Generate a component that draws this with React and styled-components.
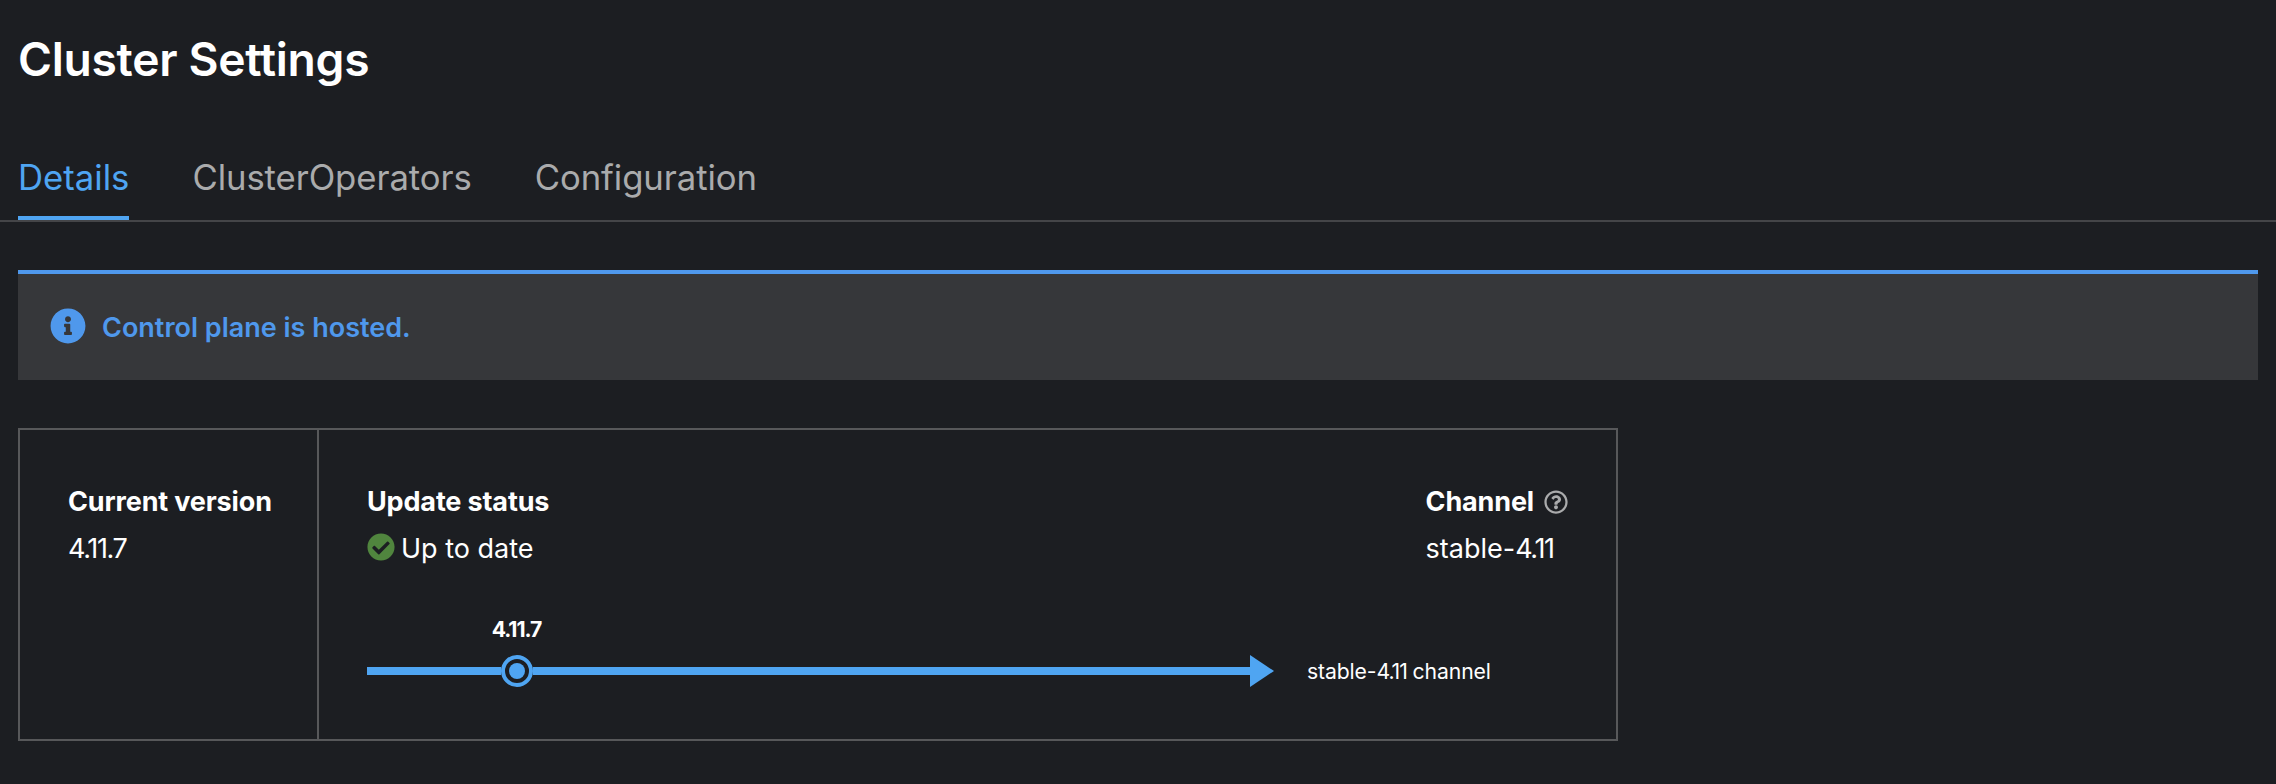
import React from 'react';
import styled, { createGlobalStyle } from 'styled-components';
import { FaInfoCircle, FaCheckCircle, FaRegQuestionCircle } from 'react-icons/fa';

const colors = {
  background: '#1c1e22',
  active: '#4fa5f2',
  info: '#4f98ec',
  success: '#50853e',
  alert: '#36373a',
  rule: '#444548',
  border: '#57585a',
  muted: '#aaabac',
};

const GlobalStyle = createGlobalStyle`
  * { box-sizing: border-box; }
  body {
    margin: 0;
    background: ${colors.background};
    color: #fff;
    font-family: Inter, "Liberation Sans", sans-serif;
    font-size: 27px;
    line-height: 42px;
  }
  svg { display: block; flex: none; }
`;

const Page = styled.main`
  min-height: 784px;
  padding-top: 28px;
`;

const Title = styled.h1`
  margin: 0;
  padding: 0 18px;
  font-size: 46.2px;
  line-height: 62px;
  font-weight: 600;
  letter-spacing: -0.3px;
`;

const Tabs = styled.nav`
  display: flex;
  gap: 64px;
  margin-top: 60px;
  padding: 0 18px;
  border-bottom: 2px solid ${colors.rule};
`;

const Tab = styled.a`
  height: 70px;
  font-size: 34.7px;
  line-height: 54px;
  letter-spacing: ${(p) => (p.$active ? '0' : '-0.08px')};
  white-space: nowrap;
  color: ${(p) => (p.$active ? colors.active : colors.muted)};
  border-bottom: 4px solid ${(p) => (p.$active ? colors.active : 'transparent')};

  & + & { margin-left: -1px; }
`;

const Alert = styled.section`
  display: flex;
  gap: 16px;
  height: 110px;
  margin: 48px 18px 0;
  padding: 33px 32px 0;
  background: ${colors.alert};
  border-top: 4px solid ${colors.info};
  color: ${colors.info};
  font-weight: 600;

  svg { margin-top: 1px; }
`;

const Card = styled.section`
  display: flex;
  width: 1600px;
  height: 313px;
  margin: 48px 0 0 18px;
  border: 2px solid ${colors.border};
`;

const VersionPanel = styled.div`
  width: 299px;
  padding: 51px 0 0 48px;
  border-right: 2px solid ${colors.border};
`;

const UpdatePanel = styled.div`
  flex: 1;
  padding: 51px 48px 0;
`;

const PanelHeader = styled.div`
  display: flex;
  justify-content: space-between;
`;

const Field = styled.div`
  display: flex;
  flex-direction: column;
  gap: 5px;
`;

const Label = styled.div`
  display: flex;
  align-items: center;
  gap: 10px;
  font-weight: 700;
  letter-spacing: -0.15px;
  white-space: nowrap;
`;

const HelpIcon = styled(FaRegQuestionCircle)`
  color: ${colors.muted};
`;

const Value = styled.div`
  display: flex;
  align-items: center;
  gap: 6px;
  white-space: nowrap;
`;

const SuccessIcon = styled(FaCheckCircle)`
  margin-bottom: 4px;
  color: ${colors.success};
`;

const VersionNumber = styled.span`
  letter-spacing: -0.05em;
`;

const Timeline = styled.div`
  margin-top: 43px;
  font-size: 21.2px;
  line-height: 33px;
`;

const Milestone = styled.div`
  width: 299px;
  text-align: center;
  font-weight: 700;
`;

const Track = styled.div`
  display: flex;
  align-items: center;
  height: 32px;
  margin-top: 9px;
`;

const Segment = styled.div`
  width: ${(p) => p.$width}px;
  height: 8px;
  background: ${colors.active};
`;

const Marker = styled.div`
  display: grid;
  place-items: center;
  width: 32px;
  height: 32px;
  border: 4px solid ${colors.active};
  border-radius: 50%;

  &::after {
    content: '';
    width: 16px;
    height: 16px;
    border-radius: 50%;
    background: ${colors.active};
  }
`;

const Arrow = styled.div`
  border-left: 24px solid ${colors.active};
  border-top: 16px solid transparent;
  border-bottom: 16px solid transparent;
`;

const ChannelName = styled.div`
  margin-left: 33px;
  letter-spacing: -0.12px;
  white-space: nowrap;
`;

export default function App() {
  return (
    <>
      <GlobalStyle />
      <Page>
        <Title>Cluster Settings</Title>
        <Tabs>
          <Tab $active>Details</Tab>
          <Tab>ClusterOperators</Tab>
          <Tab>Configuration</Tab>
        </Tabs>
        <Alert>
          <FaInfoCircle size={36} />
          <span>Control plane is hosted.</span>
        </Alert>
        <Card>
          <VersionPanel>
            <Field>
              <Label>Current version</Label>
              <Value><VersionNumber>4.11.7</VersionNumber></Value>
            </Field>
          </VersionPanel>
          <UpdatePanel>
            <PanelHeader>
              <Field>
                <Label>Update status</Label>
                <Value><SuccessIcon size={28} />Up to date</Value>
              </Field>
              <Field>
                <Label>Channel<HelpIcon size={24} /></Label>
                <Value><span>stable-<VersionNumber>4.11</VersionNumber></span></Value>
              </Field>
            </PanelHeader>
            <Timeline>
              <Milestone><VersionNumber>4.11.7</VersionNumber></Milestone>
              <Track>
                <Segment $width={134} />
                <Marker />
                <Segment $width={717} />
                <Arrow />
                <ChannelName>stable-<VersionNumber>4.11</VersionNumber> channel</ChannelName>
              </Track>
            </Timeline>
          </UpdatePanel>
        </Card>
      </Page>
    </>
  );
}
